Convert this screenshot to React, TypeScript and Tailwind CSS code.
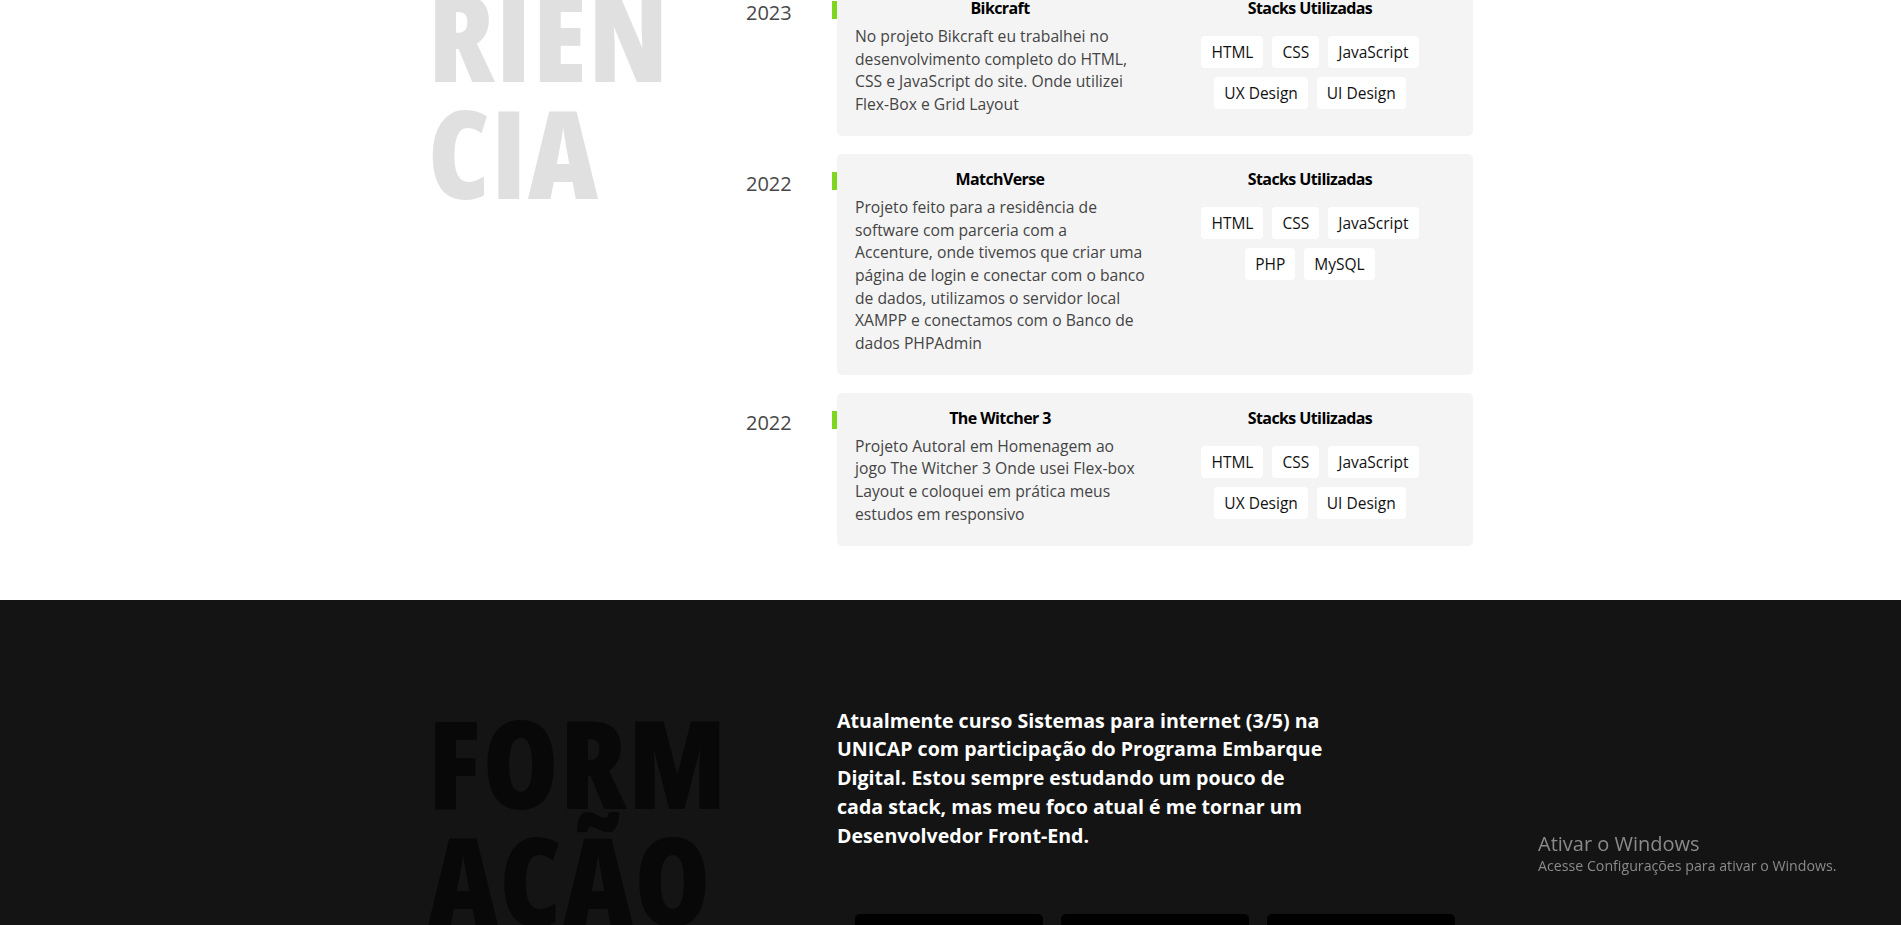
import React from 'react';

interface Projeto {
  ano: string;
  titulo: string;
  descricao: string[];
  stacks: string[];
}

// as quebras de linha seguem o layout original do card
const projetos: Projeto[] = [
  {
    ano: '2023',
    titulo: 'Bikcraft',
    descricao: [
      'No projeto Bikcraft eu trabalhei no',
      'desenvolvimento completo do HTML,',
      'CSS e JavaScript do site. Onde utilizei',
      'Flex-Box e Grid Layout',
    ],
    stacks: ['HTML', 'CSS', 'JavaScript', 'UX Design', 'UI Design'],
  },
  {
    ano: '2022',
    titulo: 'MatchVerse',
    descricao: [
      'Projeto feito para a residência de',
      'software com parceria com a',
      'Accenture, onde tivemos que criar uma',
      'página de login e conectar com o banco',
      'de dados, utilizamos o servidor local',
      'XAMPP e conectamos com o Banco de',
      'dados PHPAdmin',
    ],
    stacks: ['HTML', 'CSS', 'JavaScript', 'PHP', 'MySQL'],
  },
  {
    ano: '2022',
    titulo: 'The Witcher 3',
    descricao: [
      'Projeto Autoral em Homenagem ao',
      'jogo The Witcher 3 Onde usei Flex-box',
      'Layout e coloquei em prática meus',
      'estudos em responsivo',
    ],
    stacks: ['HTML', 'CSS', 'JavaScript', 'UX Design', 'UI Design'],
  },
];

const formacao = [
  'Atualmente curso Sistemas para internet (3/5) na',
  'UNICAP com participação do Programa Embarque',
  'Digital. Estou sempre estudando um pouco de',
  'cada stack, mas meu foco atual é me tornar um',
  'Desenvolvedor Front-End.',
];

const ProjetoItem: React.FC<{ projeto: Projeto }> = ({ projeto }) => {
  return (
    <div className="flex items-start">
      <span className="w-[86px] shrink-0 pt-[18px] text-[20px] leading-[24px] font-medium text-[#474747]">
        {projeto.ano}
      </span>
      <span className="w-[5px] h-[18px] mt-[18px] shrink-0 bg-[#7fd61e]" />
      <div className="w-[636px] rounded-[5px] bg-[#f4f4f4] px-[18px] pt-[14px] pb-[20px] grid grid-cols-[298px_290px] gap-x-[12px]">
        <div>
          <h3 className="w-[290px] text-center text-[16px] leading-[22px] font-bold tracking-[-0.6px] text-black">
            {projeto.titulo}
          </h3>
          <p className="mt-[6px] text-[15.7px] leading-[22.7px] font-medium text-[#444]">
            {projeto.descricao.map(linha => (
              <span key={linha} className="block whitespace-nowrap">{linha}</span>
            ))}
          </p>
        </div>
        <div>
          <h3 className="text-center text-[16px] leading-[22px] font-bold tracking-[-0.6px] text-black">
            Stacks Utilizadas
          </h3>
          <ul className="mt-[17px] w-[240px] mx-auto flex flex-wrap justify-center gap-[9px]">
            {projeto.stacks.map(stack => (
              <li key={stack} className="bg-white rounded-[4px] px-[10px] py-[6px] text-[15.5px] leading-[20px] font-medium text-[#111]">
                {stack}
              </li>
            ))}
          </ul>
        </div>
      </div>
    </div>
  );
};

export default function App() {
  return (
    <div className="relative min-h-[925px] overflow-hidden bg-white font-['Open_Sans',sans-serif]">
      {/* experiência */}
      <section className="pb-[54px]">
        <div className="w-[1045px] mx-auto flex items-start">
          <h2 className="w-[318px] shrink-0 mt-[-140px] text-[122px] leading-[117px] font-extrabold font-stretch-[80%] tracking-[1.5px] text-[#e0e0e0]">
            <span className="block">EXPE</span>
            <span className="block">RIEN</span>
            <span className="block">CIA</span>
          </h2>
          <div className="mt-[-17px] flex flex-col gap-[18px]">
            {projetos.map((p, i) => (
              <ProjetoItem key={i} projeto={p} />
            ))}
          </div>
        </div>
      </section>

      {/* formação */}
      <section className="bg-[#141414] pt-[104px] pb-[40px]">
        <div className="w-[1045px] mx-auto flex items-start">
          <h2 className="w-[409px] shrink-0 text-[122px] leading-[117px] font-extrabold font-stretch-[80%] tracking-[1.5px] text-[#080808]">
            <span className="block">FORM</span>
            <span className="block">AÇÃO</span>
          </h2>
          <div className="w-[636px]">
            <p className="mt-[3px] text-[19.6px] leading-[28.8px] font-bold text-white">
              {formacao.map(linha => (
                <span key={linha} className="block whitespace-nowrap">{linha}</span>
              ))}
            </p>
            <div className="mt-[63px] px-[18px] grid grid-cols-3 gap-[18px]">
              <div className="h-[160px] rounded-t-[5px] bg-black" />
              <div className="h-[160px] rounded-t-[5px] bg-black" />
              <div className="h-[160px] rounded-t-[5px] bg-black" />
            </div>
          </div>
        </div>
      </section>

      <div className="fixed left-[1538px] top-[832px] text-[#8a8a8a]">
        <p className="text-[20px] leading-[24px]">Ativar o Windows</p>
        <p className="text-[14.2px] leading-[20px]">Acesse Configurações para ativar o Windows.</p>
      </div>
    </div>
  );
}
